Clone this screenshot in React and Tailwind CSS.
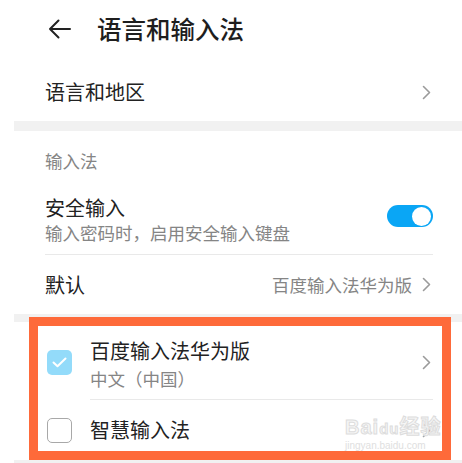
import React from 'react';

const font = { fontFamily: '"Noto Sans CJK SC", "Noto Sans", sans-serif' };

const Chevron = ({ className = '' }) => (
  <svg width="9" height="15" viewBox="0 0 9 15" className={className}>
    <path d="M1.5 1.5 L7.5 7.5 L1.5 13.5" fill="none" stroke="#9b9b9b" strokeWidth="1.6" strokeLinecap="round" strokeLinejoin="round" />
  </svg>
);

const Toggle = () => (
  <div className="w-[46px] h-[22px] rounded-full bg-[#0aa6f5] flex items-center justify-end pr-[2px]">
    <div className="w-[19px] h-[19px] rounded-full bg-white" />
  </div>
);

const CheckBox = ({ checked }) =>
  checked ? (
    <div className="w-[25px] h-[25px] rounded-[5px] bg-[#93dbfa] flex items-center justify-center">
      <svg width="15" height="11" viewBox="0 0 15 11">
        <path d="M1.5 5.5 L5.5 9.3 L13.5 1.5" fill="none" stroke="#ffffff" strokeWidth="2" strokeLinecap="round" strokeLinejoin="round" />
      </svg>
    </div>
  ) : (
    <div className="w-[25px] h-[25px] rounded-[5px] border-[1.5px] border-[#a8a8a8] bg-white" />
  );

export default function App() {
  return (
    <div className="relative w-[462px] h-[463px] bg-white overflow-hidden text-[#222222]" style={font}>
      {/* Header */}
      <div className="h-[58px] flex items-center">
        <svg width="23" height="20" viewBox="0 0 23 20" className="ml-[48px]">
          <path d="M22 10 H2 M10.5 1.5 L2 10 L10.5 18.5" fill="none" stroke="#222222" strokeWidth="2" strokeLinecap="round" strokeLinejoin="round" />
        </svg>
        <span className="ml-[26px] text-[24.5px] leading-[30px] font-medium text-[#1e1e1e]">语言和输入法</span>
      </div>

      <div className="ml-[14px]">
        {/* Language and region */}
        <div className="h-[63px] pt-[5px] flex items-center justify-between pl-[31px] pr-[31px]">
          <span className="text-[20px] leading-[26px]">语言和地区</span>
          <Chevron />
        </div>

        <div className="h-[10px] bg-[#f1f1f1]" />

        {/* Input method section */}
        <div className="pl-[31px] pr-[29px]">
          <div className="h-[52px] pt-[19px]">
            <span className="block text-[17.5px] leading-[22px] text-[#858585]">输入法</span>
          </div>

          <div className="h-[71px] flex items-start justify-between">
            <div className="pt-[12px]">
              <div className="text-[20px] leading-[26px]">安全输入</div>
              <div className="text-[17.5px] leading-[24px] text-[#858585]">输入密码时，启用安全输入键盘</div>
            </div>
            <div className="mt-[22px]">
              <Toggle />
            </div>
          </div>

          <div className="h-px bg-[#e9e9e9]" />

          <div className="h-[59px] flex items-center justify-between">
            <span className="text-[20px] leading-[26px]">默认</span>
            <div className="flex items-center gap-[10px] pr-[2px]">
              <span className="text-[17.5px] leading-[24px] text-[#858585]">百度输入法华为版</span>
              <Chevron />
            </div>
          </div>
        </div>

        <div className="h-[8px] bg-[#f1f1f1]" />

        {/* Installed keyboards */}
        <div className="pl-[33px] pr-[31px]">
          <div className="h-[77px] flex items-start">
            <div className="mt-[28px]">
              <CheckBox checked />
            </div>
            <div className="ml-[18px] pt-[15px] flex-1">
              <div className="text-[20px] leading-[28px]">百度输入法华为版</div>
              <div className="text-[17.5px] leading-[28px] text-[#858585]">中文（中国）</div>
            </div>
            <Chevron className="mt-[33px]" />
          </div>
          <div className="h-px bg-[#e9e9e9] ml-[43px] -mr-[2px]" />
          <div className="h-[60px] flex items-center">
            <CheckBox />
            <span className="ml-[18px] flex-1 text-[20px] leading-[26px]">智慧输入法</span>
            <Chevron />
          </div>
        </div>
        <div className="h-[8px] bg-[#f1f1f1]" />
      </div>

      {/* Annotation frame */}
      <div className="absolute left-[29px] top-[317px] w-[422px] h-[143px] border-[9px] border-[#fe6a3a]" />

      {/* Watermark */}
      <div className="absolute left-[345px] top-[416px] flex flex-col items-start">
        <div
          className="text-[20px] leading-[22px] font-bold tracking-[1px] text-[#f6f6f6]"
          style={{ fontFamily: '"Liberation Sans", "Noto Sans CJK SC", sans-serif', WebkitTextStroke: '1px #dddddd' }}
        >
          Bai<span className="text-[15px]">du</span>经验
        </div>
        <div
          className="text-[10px] leading-[12px] text-[#e0e0e0]"
          style={{ fontFamily: '"Liberation Sans", sans-serif' }}
        >
          jingyan.baidu.com
        </div>
      </div>
    </div>
  );
}
